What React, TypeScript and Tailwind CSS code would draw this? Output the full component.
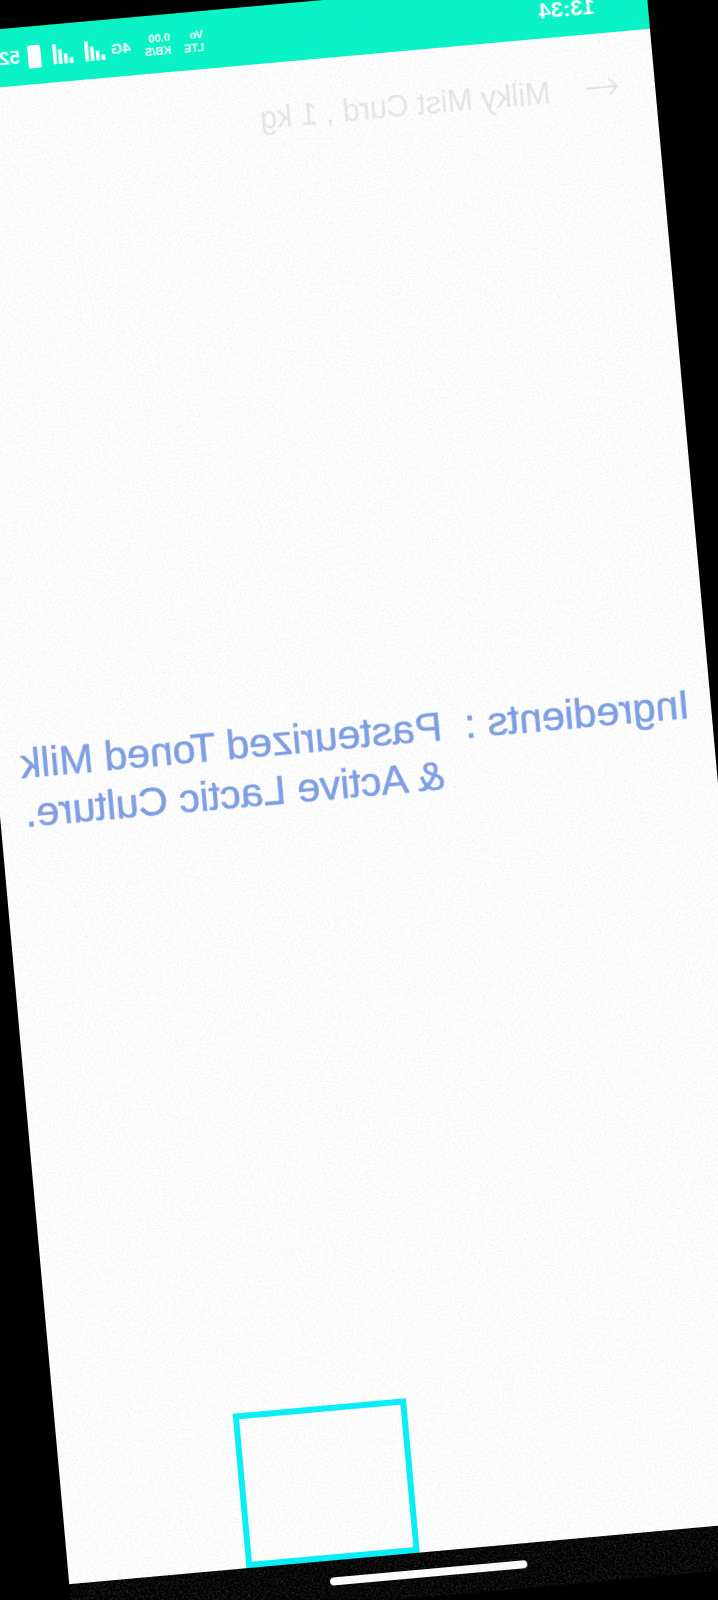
const font = { fontFamily: '"Liberation Sans", Arial, sans-serif' };

const SignalBars = ({ className }: { className: string }) => (
  <svg className={className} viewBox="0 0 24 22" fill="white" aria-hidden="true">
    <rect x="1" y="16" width="4" height="6" />
    <rect x="7" y="11" width="4" height="11" />
    <rect x="13" y="6" width="4" height="16" />
    <rect x="19" y="0" width="4" height="22" />
  </svg>
);

const StatusBar = () => (
  <div className="flex h-[58px] shrink-0 items-center bg-[#00f5c6] pl-[53px] pr-[67px] pt-[2px] text-white">
    <span className="text-[22px] font-bold">13:34</span>
    <div className="ml-auto flex items-center">
      <div className="flex w-[24px] flex-col text-[11px] font-bold leading-[13px]">
        <span>Vo</span>
        <span>LTE</span>
      </div>
      <div className="ml-[9px] flex w-[30px] flex-col text-[11px] font-bold leading-[13px]">
        <span>0.00</span>
        <span>KB/S</span>
      </div>
      <span className="ml-[10px] text-[15px] font-bold">4G</span>
      <SignalBars className="ml-[4px] h-[20px] w-[24px]" />
      <SignalBars className="ml-[8px] h-[20px] w-[24px]" />
      <div className="ml-[10px] h-[23px] w-[13px] rounded-[2px] bg-white" />
      <span className="ml-[8px] text-[19px] font-bold">52</span>
    </div>
  </div>
);

const Toolbar = () => (
  <div className="flex h-[110px] shrink-0 items-center pl-[36px] text-[#e6e6e6]">
    <svg className="mb-[2px] h-[20px] w-[33px]" viewBox="0 0 33 20" fill="none" stroke="currentColor" strokeWidth="2" aria-hidden="true">
      <path d="M33 10H2M10 2l-8 8 8 8" />
    </svg>
    <span className="ml-[36px] text-[30.5px]">Milky Mist Curd , 1 kg</span>
  </div>
);

// film grain that sits over the whole photographed screen
const Grain = () => (
  <svg className="pointer-events-none absolute inset-0 h-full w-full opacity-[0.2]" aria-hidden="true">
    <filter id="grain">
      <feTurbulence type="fractalNoise" baseFrequency="0.6" numOctaves="2" />
      <feColorMatrix values="0 0 0 0 0.5  0 0 0 0 0.5  0 0 0 0 0.5  3.5 0 0 0 -1.6" />
    </filter>
    <rect width="100%" height="100%" filter="url(#grain)" />
  </svg>
);

export default function App() {
  return (
    <div className="h-[1600px] w-[718px] overflow-hidden bg-black" style={font}>
      <div className="relative flex h-[1600px] w-[718px] -rotate-[5.15deg] -scale-x-100 flex-col bg-white blur-[0.7px]">
        <StatusBar />
        <Toolbar />
        <p className="mt-[542px] whitespace-pre-wrap pl-[20px] pr-[25px] text-right text-[41px] leading-[49px] text-[#7a9de4] [-webkit-text-stroke:0.6px_#7a9de4]">
          {'Ingredients :  Pasteurized Toned Milk & Active Lactic Culture.'}
        </p>
        <div className="flex-1" />
        <div className="ml-[366px] h-[155px] w-[174px] border-[6px] border-[#00f0fa]" />
        <div className="flex h-[45px] shrink-0 items-center justify-center bg-black pb-[4px]">
          <div className="h-[8px] w-[198px] rounded-full bg-white" />
        </div>
        <Grain />
      </div>
    </div>
  );
}
